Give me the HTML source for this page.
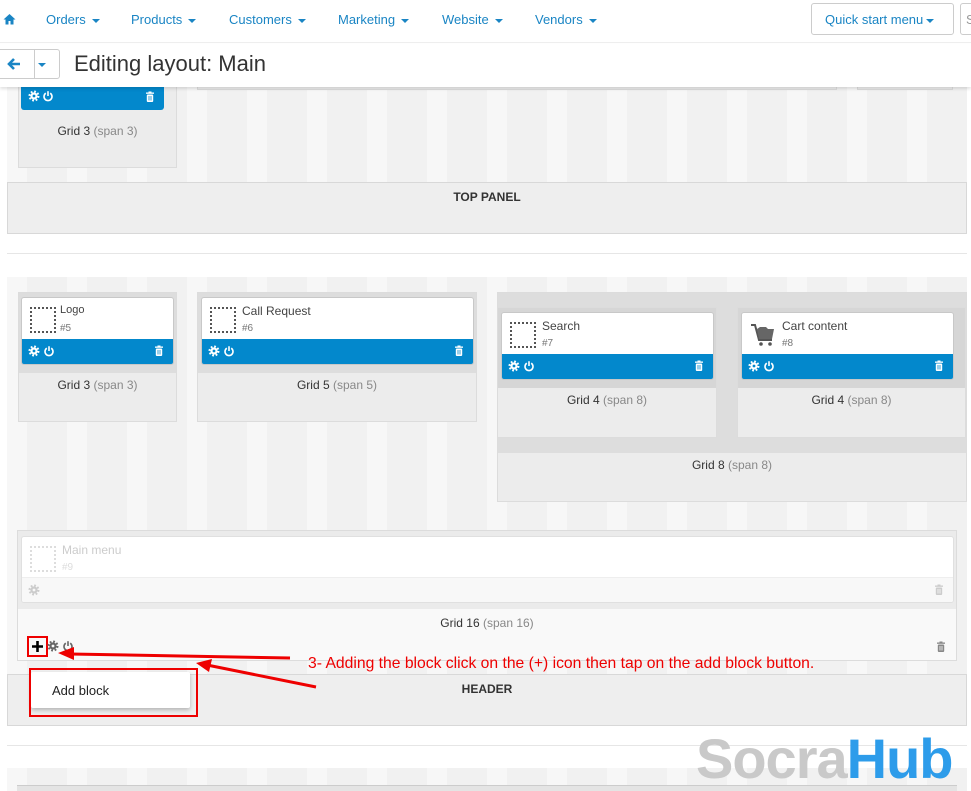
<!DOCTYPE html>
<html><head><meta charset="utf-8"><style>
*{box-sizing:border-box;margin:0;padding:0}
body{width:971px;height:791px;overflow:hidden;position:relative;background:#fff;font-family:"Liberation Sans",Arial,sans-serif;color:#333}
.a{position:absolute}
.stripes{background:repeating-linear-gradient(90deg,#f7f7f7 0 20px,#f1f1f1 20px 60px)}
.nav{top:0;left:0;width:971px;height:43px;border-bottom:1px solid #eee;background:#fff}
.nav span{position:absolute;top:12px;font-size:13px;color:#1a85c4}
.caret{display:inline-block;width:0;height:0;border-left:4px solid transparent;border-right:4px solid transparent;border-top:4px solid #1a85c4;vertical-align:middle;margin-left:6px}
.box{background:#ececec;border:1px solid #dcdcdc}
.lbl{position:absolute;left:0;right:0;text-align:center;font-size:12px;color:#333}
.lbl i{font-style:normal;color:#888}
.card{position:absolute;border-radius:3px;overflow:hidden;background:#fff;border:1px solid #c8c8c8}
.card .bar{position:absolute;left:0;right:0;bottom:0;height:25px;background:#0388cc}
.card .t{position:absolute;left:40px;top:6px;font-size:12px;color:#444}
.card .n{position:absolute;left:40px;top:25px;font-size:10px;color:#777}
.dots{position:absolute;left:8px;top:9px;width:26px;height:26px;border:2px dotted #555}
.bar svg{position:absolute;top:6px}
.pnl{background:#eee;border:1px solid #d8d8d8}
.pnl b{position:absolute;left:0;right:0;top:7px;text-align:center;font-size:12px;color:#333}
</style></head><body>
<svg width="0" height="0" style="position:absolute"><defs>
<g id="gear"><circle cx="6" cy="6" r="4.3" fill="none" stroke="currentColor" stroke-width="2.4" stroke-dasharray="1.7 1.68"/><circle cx="6" cy="6" r="3.6" fill="currentColor"/><circle cx="6" cy="6" r="1.4" fill="var(--h)"/></g>
<g id="pow"><path d="M3.8 3.2A4 4 0 1 0 8.2 3.2" fill="none" stroke="currentColor" stroke-width="1.6"/><path d="M6 1.2V6" stroke="currentColor" stroke-width="1.6"/></g>
<g id="trash"><rect x="2" y="1.5" width="8" height="1.3" fill="currentColor"/><rect x="4.5" y="0.5" width="3" height="1.5" fill="currentColor"/><rect x="2.8" y="3.5" width="6.4" height="7.5" rx="1" fill="currentColor"/><path d="M5 5V9.5M7 5V9.5" stroke="var(--h)" stroke-width=".8"/></g>
</defs></svg>

<div class="a nav">
<svg class="a" style="left:3px;top:13px" width="13" height="12" viewBox="0 0 13 12"><path d="M6.5 1L0.5 6.5H2.5V11.5H5.5V8H7.5V11.5H10.5V6.5H12.5Z" fill="#1a85c4"/></svg>
<span style="left:46px">Orders<i class="caret"></i></span>
<span style="left:131px">Products<i class="caret"></i></span>
<span style="left:229px">Customers<i class="caret"></i></span>
<span style="left:338px">Marketing<i class="caret"></i></span>
<span style="left:442px">Website<i class="caret"></i></span>
<span style="left:535px">Vendors<i class="caret"></i></span>
<div class="a" style="left:811px;top:3px;width:143px;height:32px;border:1px solid #ccc;border-radius:3px"></div>
<span style="left:825px;top:12px">Quick start menu<i class="caret" style="margin-left:3px;border-top-color:#1a85c4"></i></span>
<div class="a" style="left:960px;top:3px;width:20px;height:32px;border:1px solid #ccc;border-radius:3px"></div>
<span style="left:966px;top:12px;color:#999">S</span>
</div>

<div class="a" style="top:44px;left:0;width:971px;height:43px;background:#fff;box-shadow:0 2px 3px rgba(0,0,0,.12);z-index:5">
<div class="a" style="left:-3px;top:5px;width:63px;height:30px;border:1px solid #ccc;border-radius:3px"></div>
<div class="a" style="left:34px;top:5px;width:1px;height:30px;background:#ccc"></div>
<svg class="a" style="left:7px;top:14px" width="14" height="12" viewBox="0 0 14 12"><path d="M7 1L2 6L7 11M2 6H13" fill="none" stroke="#1a85c4" stroke-width="2.6"/></svg>
<i class="caret a" style="left:38px;top:19px;margin:0"></i>
<div class="a" style="left:74px;top:7px;font-size:22px;color:#333">Editing layout: Main</div>
</div>

<!-- section 1 -->
<div class="a stripes" style="left:7px;top:87px;width:960px;height:96px"></div>
<div class="a box" style="left:18px;top:80px;width:159px;height:88px"></div>
<div class="a" style="left:21px;top:84px;width:143px;height:26px;background:#0388cc;border-radius:0 0 3px 3px;color:#fff;--h:#0388cc">
<svg class="a" style="left:7px;top:6px" width="12" height="12"><use href="#gear"/></svg>
<svg class="a" style="left:21px;top:6px" width="12" height="12"><use href="#pow"/></svg>
<svg class="a" style="left:123px;top:7px" width="12" height="12"><use href="#trash"/></svg>
</div>
<div class="lbl" style="left:18px;width:159px;top:124px;right:auto">Grid 3 <i>(span 3)</i></div>
<div class="a" style="left:197px;top:84px;width:640px;height:6px;background:#ececec;border:1px solid #ddd"></div>
<div class="a" style="left:857px;top:84px;width:96px;height:6px;background:#ececec;border:1px solid #ddd"></div>
<div class="a pnl" style="left:7px;top:182px;width:960px;height:52px"><b>TOP PANEL</b></div>
<div class="a" style="left:7px;top:253px;width:960px;height:1px;background:#e6e6e6"></div>

<!-- section 2 -->
<div class="a stripes" style="left:7px;top:277px;width:960px;height:398px"></div>
<div class="a box" style="left:18px;top:292px;width:159px;height:130px"><div class="a" style="left:0;top:0;right:0;height:80px;background:#ddd"></div></div>
<div class="card" style="left:21px;top:297px;width:153px;height:68px;--h:#0388cc;color:#fff"><div class="dots"></div><div class="t" style="left:38px;font-size:11px">Logo</div><div class="n" style="left:38px">#5</div><div class="bar"><svg style="left:6px" width="12" height="12"><use href="#gear"/></svg><svg style="left:21px" width="12" height="12"><use href="#pow"/></svg><svg style="left:131px" width="12" height="12"><use href="#trash"/></svg></div></div>
<div class="lbl" style="left:18px;width:159px;top:378px;right:auto">Grid 3 <i>(span 3)</i></div>
<div class="a box" style="left:197px;top:292px;width:280px;height:130px"><div class="a" style="left:0;top:0;right:0;height:80px;background:#ddd"></div></div>
<div class="card" style="left:201px;top:297px;width:273px;height:68px;--h:#0388cc;color:#fff"><div class="dots"></div><div class="t">Call Request</div><div class="n">#6</div><div class="bar"><svg style="left:6px" width="12" height="12"><use href="#gear"/></svg><svg style="left:21px" width="12" height="12"><use href="#pow"/></svg><svg style="left:251px" width="12" height="12"><use href="#trash"/></svg></div></div>
<div class="lbl" style="left:197px;width:280px;top:378px;right:auto">Grid 5 <i>(span 5)</i></div>
<div class="a box" style="left:497px;top:292px;width:470px;height:210px"><div class="a" style="left:0;top:0;right:0;height:160px;background:#ddd"></div></div>
<div class="a box" style="left:497px;top:307px;width:220px;height:131px"><div class="a" style="left:0;top:0;right:0;height:80px;background:#d6d6d6"></div></div>
<div class="a box" style="left:737px;top:307px;width:229px;height:131px"><div class="a" style="left:0;top:0;right:0;height:80px;background:#d6d6d6"></div></div>
<div class="card" style="left:501px;top:312px;width:213px;height:68px;--h:#0388cc;color:#fff"><div class="dots"></div><div class="t">Search</div><div class="n">#7</div><div class="bar"><svg style="left:6px" width="12" height="12"><use href="#gear"/></svg><svg style="left:21px" width="12" height="12"><use href="#pow"/></svg><svg style="left:191px" width="12" height="12"><use href="#trash"/></svg></div></div>
<div class="card" style="left:741px;top:312px;width:213px;height:68px;--h:#0388cc;color:#fff">
<svg class="a" style="left:8px;top:10px" width="26" height="24" viewBox="0 0 26 24"><path d="M1 2H5L9 17H22" fill="none" stroke="#555" stroke-width="2"/><path d="M7 6L10 4H16L18 6H24L22 16H9Z" fill="#666"/><circle cx="11" cy="21" r="1.8" fill="#555"/><circle cx="20" cy="21" r="1.8" fill="#555"/></svg>
<div class="t">Cart content</div><div class="n">#8</div><div class="bar"><svg style="left:6px" width="12" height="12"><use href="#gear"/></svg><svg style="left:21px" width="12" height="12"><use href="#pow"/></svg><svg style="left:191px" width="12" height="12"><use href="#trash"/></svg></div></div>
<div class="lbl" style="left:497px;width:220px;top:393px;right:auto">Grid 4 <i>(span 8)</i></div>
<div class="lbl" style="left:737px;width:229px;top:393px;right:auto">Grid 4 <i>(span 8)</i></div>
<div class="lbl" style="left:497px;width:470px;top:458px;right:auto">Grid 8 <i>(span 8)</i></div>
<div class="a box" style="left:17px;top:530px;width:940px;height:131px;background:#f9f9f9"><div class="a" style="left:0;top:0;right:0;height:78px;background:#ebebeb"></div></div>
<div class="card" style="left:21px;top:536px;width:933px;height:67px;border-color:#e0e0e0;--h:#f8f8f8;color:#ccc">
<div class="dots" style="border-color:#ddd"></div><div class="t" style="color:#ccc">Main menu</div><div class="n" style="color:#ddd">#9</div>
<div class="bar" style="background:#f8f8f8;border-top:1px solid #eee"><svg style="left:6px" width="12" height="12"><use href="#gear"/></svg><svg style="left:911px" width="12" height="12"><use href="#trash"/></svg></div></div>
<div class="lbl" style="left:17px;width:940px;top:616px;right:auto">Grid 16 <i>(span 16)</i></div>
<div class="a" style="left:27px;top:636px;width:21px;height:21px;border:2px solid #e00"></div>
<svg class="a" style="left:31px;top:640px" width="13" height="13" viewBox="0 0 13 13"><path d="M6.5 1V12M1 6.5H12" stroke="#000" stroke-width="2.6"/></svg>
<svg class="a" style="left:47px;top:640px;color:#666;--h:#f9f9f9" width="12" height="12"><use href="#gear"/></svg>
<svg class="a" style="left:62px;top:640px;color:#666" width="12" height="12"><use href="#pow"/></svg>
<svg class="a" style="left:935px;top:641px;color:#888;--h:#f9f9f9" width="12" height="12"><use href="#trash"/></svg>
<div class="a pnl" style="left:7px;top:674px;width:960px;height:52px"><b>HEADER</b></div>
<div class="a" style="left:7px;top:745px;width:960px;height:1px;background:#e6e6e6"></div>
<div class="a stripes" style="left:7px;top:768px;width:960px;height:23px"></div>
<div class="a" style="left:17px;top:785px;width:940px;height:6px;background:#e4e4e4;border-top:1px solid #ccc"></div>

<div class="a" style="left:31px;top:672px;width:159px;height:36px;background:#fff;box-shadow:0 2px 4px rgba(0,0,0,.25);border-radius:2px"></div>
<div class="a" style="left:52px;top:683px;font-size:13px;color:#222">Add block</div>
<div class="a" style="left:29px;top:668px;width:169px;height:49px;border:2px solid #e00"></div>
<svg class="a" style="left:0;top:0" width="971" height="791">
<path d="M290 658L70 654" stroke="#e00" stroke-width="3"/><path d="M58 653L74 647L74 660Z" fill="#e00"/>
<path d="M316 687L207 665" stroke="#e00" stroke-width="3"/><path d="M196 663L212 659L209 672Z" fill="#e00"/>
</svg>
<div class="a" style="left:308px;top:655px;font-size:15.7px;color:#e00;white-space:nowrap">3- Adding the block click on the (+) icon then tap on the add block button.</div>
<div class="a" style="left:696px;top:726px;font-size:56px;font-weight:bold;letter-spacing:-1px;color:#c9c9c9;white-space:nowrap">Socra<span style="color:#2d9cea">Hub</span></div>
</body></html>
